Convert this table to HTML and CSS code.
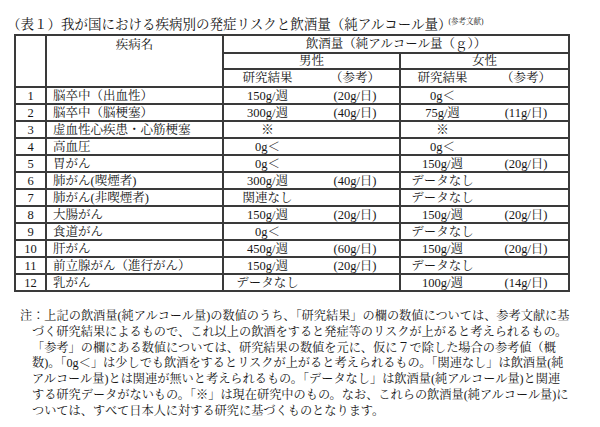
FILE: index.html
```html
<!DOCTYPE html>
<html lang="ja">
<head>
<meta charset="utf-8">
<title>我が国における疾病別の発症リスクと飲酒量</title>
<link rel="stylesheet" href="styles.css">
</head>
<body>
<div class="page">
  <h1 class="title">（表１）我が国における疾病別の発症リスクと飲酒量（純アルコール量）<span class="cite">(参考文献)</span></h1>
  <table class="risk">
    <colgroup>
      <col class="c-num">
      <col class="c-name">
      <col class="c-mres">
      <col class="c-mref">
      <col class="c-fres">
      <col class="c-fref">
    </colgroup>
    <thead>
      <tr class="h1">
        <th rowspan="3" class="num"></th>
        <th rowspan="3" class="name-h">疾病名</th>
        <th colspan="4">飲酒量（純アルコール量（ｇ））</th>
      </tr>
      <tr class="h2">
        <th colspan="2">男性</th>
        <th colspan="2">女性</th>
      </tr>
      <tr class="h3">
        <th class="res">研究結果</th>
        <th class="ref">（参考）</th>
        <th class="res">研究結果</th>
        <th class="ref">（参考）</th>
      </tr>
    </thead>
    <tbody>
      <tr><td class="num">1</td><td class="name">脳卒中（出血性）</td><td class="res">150g/週</td><td class="ref">(20g/日)</td><td class="res">0g＜</td><td class="ref"></td></tr>
      <tr><td class="num">2</td><td class="name">脳卒中（脳梗塞）</td><td class="res">300g/週</td><td class="ref">(40g/日)</td><td class="res">75g/週</td><td class="ref">(11g/日)</td></tr>
      <tr><td class="num">3</td><td class="name">虚血性心疾患・心筋梗塞</td><td class="res">※</td><td class="ref"></td><td class="res">※</td><td class="ref"></td></tr>
      <tr><td class="num">4</td><td class="name">高血圧</td><td class="res">0g＜</td><td class="ref"></td><td class="res">0g＜</td><td class="ref"></td></tr>
      <tr><td class="num">5</td><td class="name">胃がん</td><td class="res">0g＜</td><td class="ref"></td><td class="res">150g/週</td><td class="ref">(20g/日)</td></tr>
      <tr><td class="num">6</td><td class="name">肺がん(喫煙者)</td><td class="res">300g/週</td><td class="ref">(40g/日)</td><td class="res">データなし</td><td class="ref"></td></tr>
      <tr><td class="num">7</td><td class="name">肺がん(非喫煙者)</td><td class="res">関連なし</td><td class="ref"></td><td class="res">データなし</td><td class="ref"></td></tr>
      <tr><td class="num">8</td><td class="name">大腸がん</td><td class="res">150g/週</td><td class="ref">(20g/日)</td><td class="res">150g/週</td><td class="ref">(20g/日)</td></tr>
      <tr><td class="num">9</td><td class="name">食道がん</td><td class="res">0g＜</td><td class="ref"></td><td class="res">データなし</td><td class="ref"></td></tr>
      <tr><td class="num">10</td><td class="name">肝がん</td><td class="res">450g/週</td><td class="ref">(60g/日)</td><td class="res">150g/週</td><td class="ref">(20g/日)</td></tr>
      <tr><td class="num">11</td><td class="name">前立腺がん（進行がん）</td><td class="res">150g/週</td><td class="ref">(20g/日)</td><td class="res">データなし</td><td class="ref"></td></tr>
      <tr><td class="num">12</td><td class="name">乳がん</td><td class="res">データなし</td><td class="ref"></td><td class="res">100g/週</td><td class="ref">(14g/日)</td></tr>
    </tbody>
  </table>
  <p class="note">注：上記の飲酒量(純アルコール量)の数値のうち、「研究結果」の欄の数値については、参考文献に基<br>づく研究結果によるもので、これ以上の飲酒をすると発症等のリスクが上がると考えられるもの。<br>「参考」の欄にある数値については、研究結果の数値を元に、仮に７で除した場合の参考値（概<br>数)。「0g＜」は少しでも飲酒をするとリスクが上がると考えられるもの。「関連なし」は飲酒量(純<br>アルコール量)とは関連が無いと考えられるもの。「データなし」は飲酒量(純アルコール量)と関連<br>する研究データがないもの。「※」は現在研究中のもの。なお、これらの飲酒量(純アルコール量)に<br>ついては、すべて日本人に対する研究に基づくものとなります。</p>
</div>
</body>
</html>
```
FILE: styles.css
```css
html, body {
  margin: 0;
  padding: 0;
  background: #ffffff;
}

body {
  color: #161616;
  font-family: "Liberation Serif", "Noto Serif CJK JP", "Noto Sans CJK JP", serif;
}

.page {
  padding: 16px 0 0 7px;
}

.title {
  margin: 0;
  height: 18px;
  font-size: 13.5px;
  font-weight: normal;
  line-height: 18px;
  white-space: nowrap;
}

.cite {
  font-size: 7.5px;
  line-height: 0;
  vertical-align: 5px;
  margin-left: -3px;
}

.risk {
  margin-left: 7px;
  width: 554px;
  table-layout: fixed;
  border-collapse: collapse;
  font-size: 12.5px;
  line-height: 12px;
}

.c-num { width: 31px; }
.c-name { width: 177px; }
.c-mres { width: 88px; }
.c-mref { width: 89px; }
.c-fres { width: 84px; }
.c-fref { width: 85px; }

.risk th,
.risk td {
  border: 2px solid #3a3a3a;
  padding: 0;
  font-weight: normal;
  text-align: center;
  vertical-align: middle;
  white-space: nowrap;
  overflow: hidden;
}

.risk tr.h1 { height: 18px; }
.risk tr.h2 { height: 16px; }
.risk tr.h3 { height: 18px; }
.risk tbody tr { height: 17px; }

.risk .name-h {
  vertical-align: top;
  padding-top: 3px;
}

.risk .name {
  text-align: left;
  padding-left: 6px;
}

.risk .res {
  border-right: none;
}

.risk .ref {
  border-left: none;
}

.note {
  margin: 17px 0 0 13px;
  padding-left: 12px;
  text-indent: -12px;
  font-size: 12.2px;
  line-height: 15.8px;
  white-space: nowrap;
}
```
